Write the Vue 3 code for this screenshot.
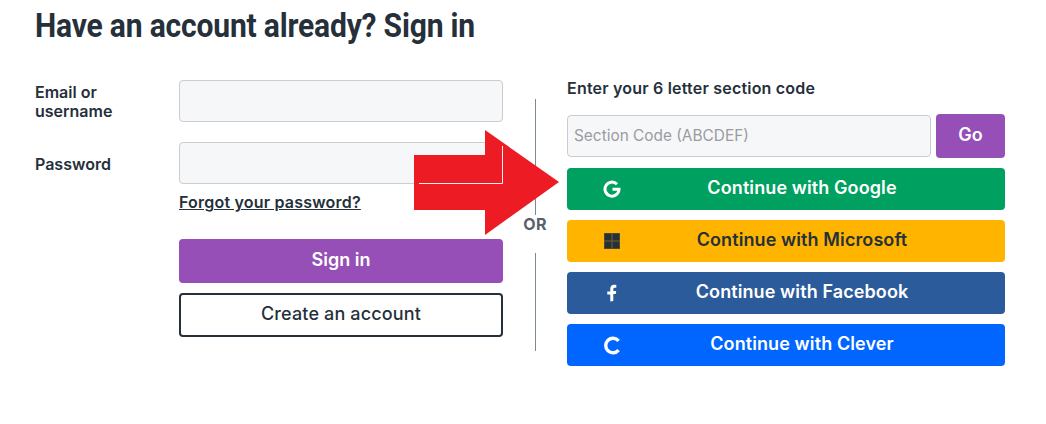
<template>
  <div class="page">
    <h1 class="title">Have an account already? Sign in</h1>
    <div class="columns">
      <form class="login" @submit.prevent>
        <div class="row">
          <label class="field-label">Email or<br />username</label>
          <input class="text-input" type="text" />
        </div>
        <div class="row password-row">
          <label class="field-label">Password</label>
          <div class="password-field">
            <input class="text-input" type="password" />
            <a class="forgot" href="#">Forgot your password?</a>
          </div>
        </div>
        <div class="actions">
          <button class="btn btn-primary">Sign in</button>
          <button class="btn btn-outline">Create an account</button>
        </div>
      </form>

      <div class="divider">
        <span class="divider-line top"></span>
        <span class="divider-text">OR</span>
        <span class="divider-line bottom"></span>
      </div>

      <div class="sso">
        <div class="section-label">Enter your 6 letter section code</div>
        <div class="section-row">
          <input class="text-input section-input" type="text" placeholder="Section Code (ABCDEF)" />
          <button class="btn btn-primary go">Go</button>
        </div>
        <div class="providers">
          <button v-for="p in providers" :key="p.name" class="btn provider" :class="p.name">
            <span class="provider-icon">
              <svg v-if="p.name === 'google'" viewBox="0 0 18 18" width="18" height="18">
                <path d="M14 4.200A7 7 0 1 0 16 9.300H9.500" fill="none" stroke="#fff" stroke-width="3" />
              </svg>
              <svg v-else-if="p.name === 'microsoft'" viewBox="0 0 16 16" width="16" height="16">
                <rect width="16" height="16" fill="#7a5f22" />
                <rect x="0.500" y="0.500" width="7" height="7" fill="#25303b" />
                <rect x="8.500" y="0.500" width="7" height="7" fill="#25303b" />
                <rect x="0.500" y="8.500" width="7" height="7" fill="#25303b" />
                <rect x="8.500" y="8.500" width="7" height="7" fill="#25303b" />
              </svg>
              <svg v-else-if="p.name === 'facebook'" viewBox="0 0 18 18" width="18" height="18">
                <path d="M7.300 17.500V10.500H4.300V7.500H7.300V4.800C7.300 2.300 8.900 .800 11 .800c1 0 1.900.1 2.300.2v2.700h-1.500c-1.200 0-1.500.6-1.500 1.500v1.800h2.900l-.4 3h-2.500v7z" fill="#fff" />
              </svg>
              <svg v-else viewBox="0 0 18 18" width="19" height="19">
                <path d="M15.600 4.300A7.300 7.300 0 1 0 15.600 13.700" fill="none" stroke="#fff" stroke-width="3.400" />
              </svg>
            </span>
            <span class="provider-label">{{ p.label }}</span>
          </button>
        </div>
      </div>
    </div>

    <svg class="arrow" viewBox="0 0 146 106" width="146" height="106">
      <polygon points="0,25 71,25 71,0 145,52 71,105 71,80 0,80" fill="#ed1c24" />
      <polyline points="5,53.500 88.500,53.500 88.500,16" fill="none" stroke="#fbeeee" stroke-width="1" />
    </svg>
  </div>
</template>

<script setup>
const providers = [
  { name: 'google', label: 'Continue with Google' },
  { name: 'microsoft', label: 'Continue with Microsoft' },
  { name: 'facebook', label: 'Continue with Facebook' },
  { name: 'clever', label: 'Continue with Clever' }
]
</script>

<style>
body {
  margin: 0;
  background: #fff;
}
</style>

<style scoped>
.page {
  position: relative;
  width: 1046px;
  height: 424px;
  box-sizing: border-box;
  padding: 0 41px 0 35px;
  overflow: hidden;
  font-family: "Inter", "Noto Sans", sans-serif;
  color: #25303b;
}

.title {
  margin: 0;
  height: 80px;
  padding-top: 7px;
  box-sizing: border-box;
  font-family: "Roboto", "Liberation Sans", sans-serif;
  font-size: 33px;
  line-height: 38px;
  font-weight: 700;
  letter-spacing: -0.2px;
  transform: scaleX(0.91);
  transform-origin: left center;
  white-space: nowrap;
}

.columns {
  display: flex;
  align-items: flex-start;
}

.login {
  width: 468px;
  flex: none;
}

.row {
  display: flex;
  margin-bottom: 20px;
}

.password-row {
  margin-bottom: 27px;
}

.field-label {
  width: 144px;
  flex: none;
  padding-top: 3px;
  font-size: 16px;
  line-height: 19px;
  font-weight: 600;
}

.password-row .field-label {
  padding-top: 13px;
}

.password-field {
  width: 324px;
}

.text-input {
  display: block;
  width: 324px;
  height: 42px;
  box-sizing: border-box;
  padding: 0 6px 2px;
  border: 1px solid #cbcccd;
  border-radius: 4px;
  background: #f6f7f9;
  font-family: inherit;
  font-size: 15.4px;
  outline: none;
}

.text-input::placeholder {
  color: #9a9ca0;
}

.forgot {
  display: block;
  margin-top: 9px;
  font-size: 16px;
  line-height: 19px;
  font-weight: 600;
  letter-spacing: 0.2px;
  color: #25303b;
  text-decoration: underline;
}

.actions {
  margin-left: 144px;
  width: 324px;
  display: flex;
  flex-direction: column;
  gap: 10px;
}

.btn {
  display: block;
  border: none;
  border-radius: 4px;
  font-family: inherit;
  font-size: 18px;
  font-weight: 600;
  padding: 0 0 3px;
}

.btn-primary {
  height: 44px;
  background: #954fb6;
  color: #fff;
}

.btn-outline {
  height: 44px;
  background: #fff;
  border: 2px solid #25303b;
  color: #25303b;
  font-weight: 500;
  letter-spacing: 0.14px;
}

.divider {
  width: 64px;
  flex: none;
  height: 252px;
  margin-top: 19px;
  display: flex;
  flex-direction: column;
  align-items: center;
}

.divider-line {
  width: 1px;
  background: #7c8a94;
}

.divider-line.top {
  height: 116px;
}

.divider-line.bottom {
  height: 98px;
}

.divider-text {
  height: 38px;
  line-height: 19px;
  font-size: 16px;
  font-weight: 700;
  letter-spacing: 0.3px;
  color: #56616c;
}

.sso {
  width: 438px;
  flex: none;
}

.section-label {
  height: 34px;
  font-size: 16px;
  line-height: 17px;
  font-weight: 600;
  letter-spacing: 0.2px;
}

.section-row {
  display: flex;
  align-items: center;
  justify-content: space-between;
  height: 44px;
  margin-bottom: 10px;
}

.section-input {
  width: 364px;
}

.go {
  width: 69px;
}

.providers {
  display: flex;
  flex-direction: column;
  gap: 10px;
}

.provider {
  position: relative;
  height: 42px;
  width: 100%;
  color: #fff;
  text-align: center;
  padding-left: 32px;
  letter-spacing: 0.1px;
}

.provider-icon {
  position: absolute;
  left: 36px;
  top: 0;
  width: 18px;
  height: 42px;
  display: flex;
  align-items: center;
  justify-content: center;
}

.google {
  background: #00a060;
}

.microsoft {
  background: #ffb500;
  color: #25303b;
}

.facebook {
  background: #2b5b9a;
}

.clever {
  background: #0066ff;
}

.arrow {
  position: absolute;
  left: 414px;
  top: 130px;
}
</style>
